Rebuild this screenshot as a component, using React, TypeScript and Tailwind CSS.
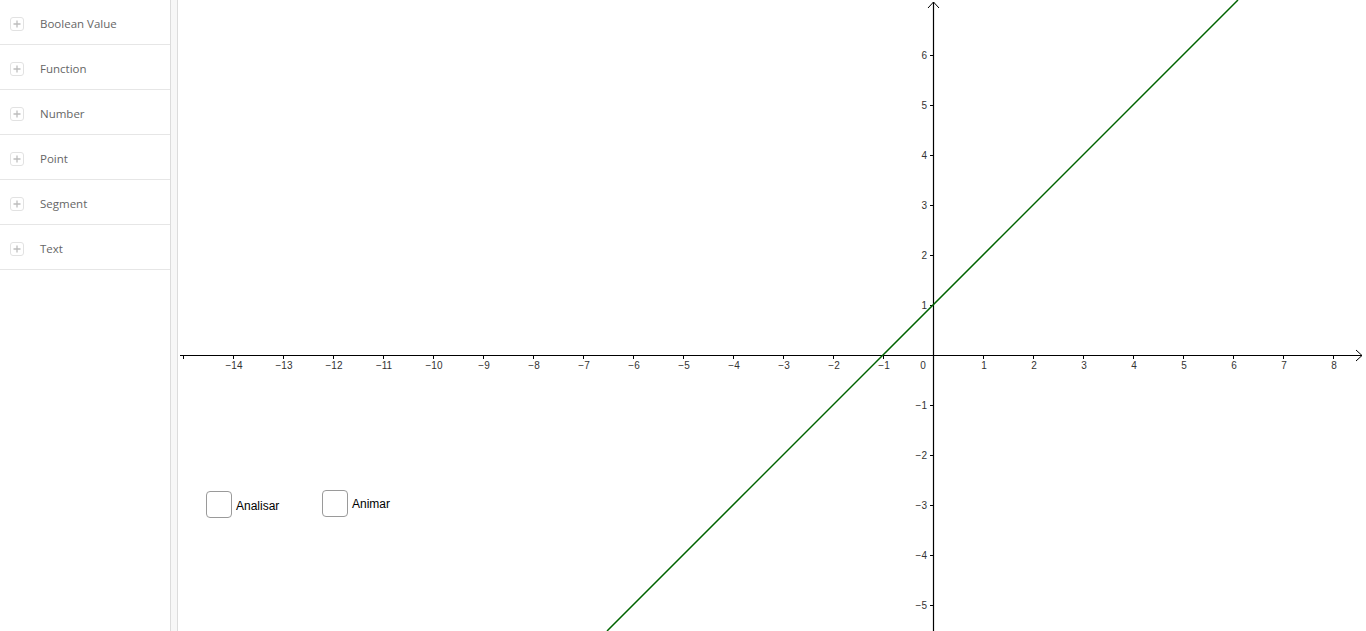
import React from 'react'

const categories = ['Boolean Value', 'Function', 'Number', 'Point', 'Segment', 'Text']

// page coordinates of the graph origin, 50px per unit
const OX = 933
const OY = 355
const U = 50
const LEFT = 178

function PlusBox() {
  return (
    <span className="flex h-[14px] w-[14px] items-center justify-center rounded-[3px] border border-[#e2e2e2]">
      <svg width="8" height="8" viewBox="0 0 8 8">
        <path d="M4 0.5v7M0.5 4h7" stroke="#bdbdbd" strokeWidth="1.3" />
      </svg>
    </span>
  )
}

function Sidebar() {
  return (
    <aside className="flex w-[171px] shrink-0 flex-col border-r border-[#dcdcdc] bg-white">
      {categories.map((c) => (
        <div key={c} className="flex h-[45px] items-center border-b border-[#e6e6e6] pl-[10px] pt-[4px]">
          <PlusBox />
          <span className="ml-[16px] text-[11.5px] text-[#666]" style={{ fontFamily: '"Open Sans", sans-serif' }}>
            {c}
          </span>
        </div>
      ))}
    </aside>
  )
}

function minus(n: number) {
  return n < 0 ? '\u2212' + Math.abs(n) : String(n)
}

function Graph() {
  const xs: number[] = []
  for (let i = -15; i <= 8; i++) if (i !== 0) xs.push(i)
  const ys: number[] = []
  for (let j = -5; j <= 6; j++) if (j !== 0) ys.push(j)

  const px = (x: number) => OX + x * U - LEFT
  const py = (y: number) => OY - y * U

  // y = x + 1 clipped to the view
  const x1 = (OY - 631) / U - 1
  const x2 = OY / U - 1

  return (
    <div className="relative flex-1 bg-white">
      <svg width="1188" height="631" className="block" style={{ fontFamily: '"Liberation Sans", Arial, sans-serif' }}>
        {/* x axis */}
        <line x1={180 - LEFT} y1={OY + 0.5} x2={1362 - LEFT} y2={OY + 0.5} stroke="#000" strokeWidth="1.2" />
        <path d={`M${1356 - LEFT} ${OY - 5}L${1362 - LEFT} ${OY + 0.5}L${1356 - LEFT} ${OY + 6}`} fill="none" stroke="#000" strokeWidth="1" />
        {/* y axis */}
        <line x1={px(0) + 0.5} y1={2} x2={px(0) + 0.5} y2={631} stroke="#000" strokeWidth="1.2" />
        <path d={`M${px(0) - 5} 8L${px(0) + 0.5} 2L${px(0) + 6} 8`} fill="none" stroke="#000" strokeWidth="1" />

        {xs.map((x) => (
          <g key={'x' + x}>
            <line x1={px(x) + 0.5} y1={OY} x2={px(x) + 0.5} y2={OY + 4} stroke="#000" strokeWidth="1" />
            {x > -15 && (
              <text x={px(x) + 1} y={OY + 14} fontSize="10" fill="#333" textAnchor="middle">
                {minus(x)}
              </text>
            )}
          </g>
        ))}
        {ys.map((y) => (
          <g key={'y' + y}>
            <line x1={px(0) - 3} y1={py(y) + 0.5} x2={px(0) + 1} y2={py(y) + 0.5} stroke="#000" strokeWidth="1" />
            <text x={px(0) - 6} y={py(y) + 4} fontSize="10" fill="#333" textAnchor="end">
              {minus(y)}
            </text>
          </g>
        ))}
        <text x={px(0) - 10} y={OY + 14} fontSize="10" fill="#333" textAnchor="middle">
          0
        </text>

        <line x1={px(x1)} y1={631} x2={px(x2)} y2={0} stroke="#006400" strokeWidth="1.5" />
      </svg>

      <label className="absolute left-[28px] top-[491px] flex items-center gap-[4px]" style={{ fontFamily: '"Liberation Sans", Arial, sans-serif' }}>
        <span className="h-[27px] w-[26px] rounded-[4px] border border-[#9a9a9a] bg-white" />
        <span className="mt-[2px] text-[12px] text-black">Analisar</span>
      </label>
      <label className="absolute left-[144px] top-[490px] flex items-center gap-[4px]" style={{ fontFamily: '"Liberation Sans", Arial, sans-serif' }}>
        <span className="h-[27px] w-[26px] rounded-[4px] border border-[#9a9a9a] bg-white" />
        <span className="text-[12px] text-black">Animar</span>
      </label>
    </div>
  )
}

export default function App() {
  return (
    <div className="flex h-[631px] w-[1366px] overflow-hidden bg-white">
      <Sidebar />
      <div className="w-[7px] shrink-0 border-r border-[#dcdcdc] bg-[#f7f7f7]" />
      <Graph />
    </div>
  )
}
